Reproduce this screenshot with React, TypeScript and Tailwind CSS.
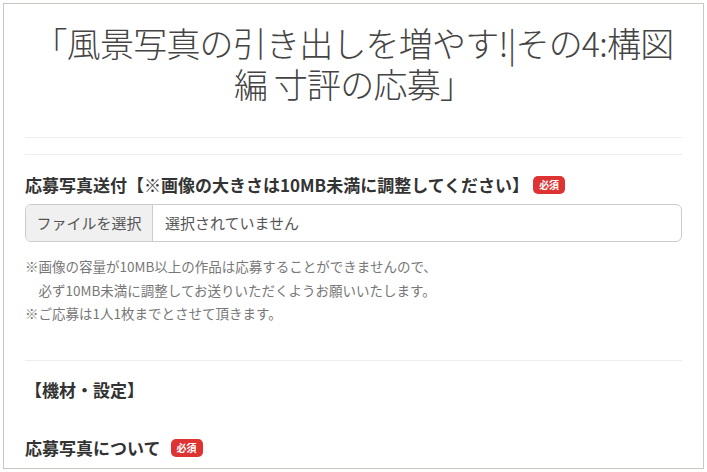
import React from 'react';

const Badge: React.FC<{ className?: string }> = ({ className = '' }) => (
  <span
    className={`inline-flex h-[18px] items-center rounded-[5px] bg-[#dd3333] px-[6px] text-[10px] font-bold leading-none text-white ${className}`}
  >
    必須
  </span>
);

const App: React.FC = () => {
  return (
    <div
      className="h-[472px] w-[707px] bg-white p-[3px]"
      style={{ fontFamily: '"Noto Sans CJK JP", "Noto Sans", sans-serif' }}
    >
      <div className="h-[466px] w-[701px] overflow-hidden border border-[#c8c8c0] px-[21px]">
        {/* Title */}
        <h1 className="mt-[18px] whitespace-nowrap text-center text-[34px] font-light leading-[41px] tracking-[-0.8px] text-[#444]">
          「風景写真の引き出しを増やす!|その4:構図
          <br />
          編 寸評の応募」
        </h1>

        <div className="mt-[33px] border-t border-[#eeeeee]" />
        <div className="mt-[16px] border-t border-[#eeeeee]" />

        {/* Upload field */}
        <div className="mt-[20px] flex items-center text-[17px] font-bold leading-[20px] text-[#333]">
          <span>応募写真送付【※画像の大きさは10MB未満に調整してください】</span>
          <Badge className="ml-[4px]" />
        </div>

        <div className="mt-[9px] flex h-[38px] overflow-hidden rounded-[6px] border border-[#cccccc] text-[15px] text-[#555]">
          <div className="flex w-[127px] items-center justify-center border-r border-[#cccccc] bg-[#f0f0f0]">
            ファイルを選択
          </div>
          <div className="flex flex-1 items-center pl-[12px]">選択されていません</div>
        </div>

        <div className="mt-[13px] text-[13.5px] leading-[23.5px] text-[#777]">
          <p>※画像の容量が10MB以上の作品は応募することができませんので、</p>
          <p>　必ず10MB未満に調整してお送りいただくようお願いいたします。</p>
          <p>※ご応募は1人1枚までとさせて頂きます。</p>
        </div>

        <div className="mt-[34px] border-t border-[#eeeeee]" />

        <div className="mt-[19px] text-[17px] font-bold leading-[20px] text-[#333]">【機材・設定】</div>

        <div className="mt-[38px] flex items-center text-[17px] font-bold leading-[20px] text-[#333]">
          <span>応募写真について</span>
          <Badge className="ml-[10px]" />
        </div>
      </div>
    </div>
  );
};

export default App;
